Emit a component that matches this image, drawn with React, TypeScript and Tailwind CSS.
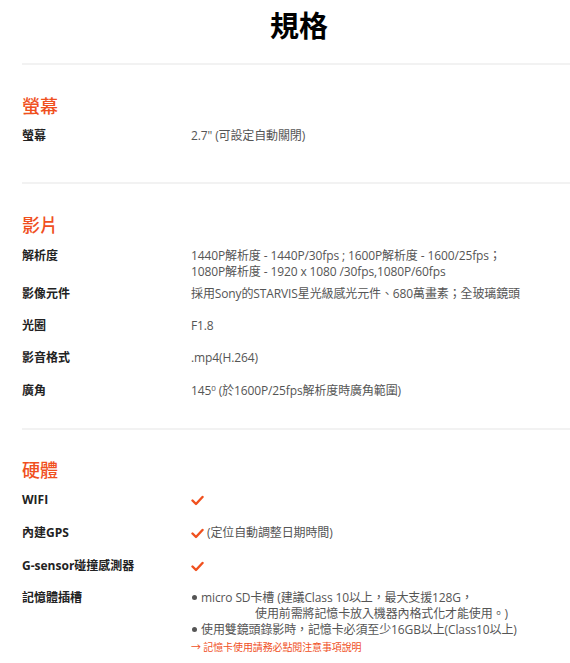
import React from 'react';

// Spec sheet: title, then sections of label / value rows split by thin dividers
const FONT = '"Open Sans", "Noto Sans CJK TC", sans-serif';

function Check() {
  return (
    <svg width="13" height="11" viewBox="0 0 13 11" className="inline-block">
      <polyline points="1.5,5.5 5,9 11.5,2" fill="none" stroke="#f0501e" strokeWidth="2.4" strokeLinecap="round" strokeLinejoin="round" />
    </svg>
  );
}

function Row({ label, children, className = '' }: { label: string; children: React.ReactNode; className?: string }) {
  return (
    <div className={`flex leading-4 ${className}`}>
      <div className="w-[169px] shrink-0 text-[12px] font-bold text-[#222]">{label}</div>
      <div className="text-[12px] text-[#555] tracking-[-0.01em]">{children}</div>
    </div>
  );
}

function Heading({ children }: { children: React.ReactNode }) {
  return <h2 className="text-[18px] leading-6 font-medium text-[#f0501e]">{children}</h2>;
}

function Divider() {
  return <div className="h-[2px] bg-[#f2f2f2]" />;
}

function Dot() {
  return <span className="inline-block w-[5px] h-[5px] rounded-full bg-[#555] align-middle mr-[4px] ml-[1px] -mt-[2px]" />;
}

export default function App() {
  return (
    <div className="bg-white pl-[22px] min-h-[663px]" style={{ fontFamily: FONT }}>
      <h1 className="pt-[8px] pl-[6px] text-center text-[29px] leading-[36px] font-bold text-black">規格</h1>
      <div className="mt-[19px]">
        <Divider />
      </div>

      <section className="pt-[29px]">
        <Heading>螢幕</Heading>
        <Row label="螢幕" className="mt-[10px]">2.7" (可設定自動關閉)</Row>
      </section>
      <div className="mt-[38px]">
        <Divider />
      </div>

      <section className="pt-[29px]">
        <Heading>影片</Heading>
        <Row label="解析度" className="mt-[11px]">
          1440P解析度 - 1440P/30fps ; 1600P解析度 - 1600/25fps；
          <br />
          1080P解析度 - 1920 x 1080 /30fps,1080P/60fps
        </Row>
        <Row label="影像元件" className="mt-[6px]">採用Sony的STARVIS星光級感光元件、680萬畫素；全玻璃鏡頭</Row>
        <Row label="光圈" className="mt-[16px]">F1.8</Row>
        <Row label="影音格式" className="mt-[16px]">.mp4(H.264)</Row>
        <Row label="廣角" className="mt-[17px]">
          145<sup className="text-[8px]">0</sup> (於1600P/25fps解析度時廣角範圍)
        </Row>
      </section>
      <div className="mt-[29px]">
        <Divider />
      </div>

      <section className="pt-[28px]">
        <Heading>硬體</Heading>
        <Row label="WIFI" className="mt-[10px]">
          <Check />
        </Row>
        <Row label="內建GPS" className="mt-[17px]">
          <Check /> (定位自動調整日期時間)
        </Row>
        <Row label="G-sensor碰撞感測器" className="mt-[17px]">
          <Check />
        </Row>
        <Row label="記憶體插槽" className="mt-[16px]">
          <div><Dot />micro SD卡槽 (建議Class 10以上，最大支援128G，</div>
          <div className="pl-[64px]">使用前需將記憶卡放入機器內格式化才能使用。)</div>
          <div><Dot />使用雙鏡頭錄影時，記憶卡必須至少16GB以上(Class10以上)</div>
          <div className="mt-[1px] text-[10px] text-[#f0501e]">→ 記憶卡使用請務必點閱注意事項說明</div>
        </Row>
      </section>
    </div>
  );
}
